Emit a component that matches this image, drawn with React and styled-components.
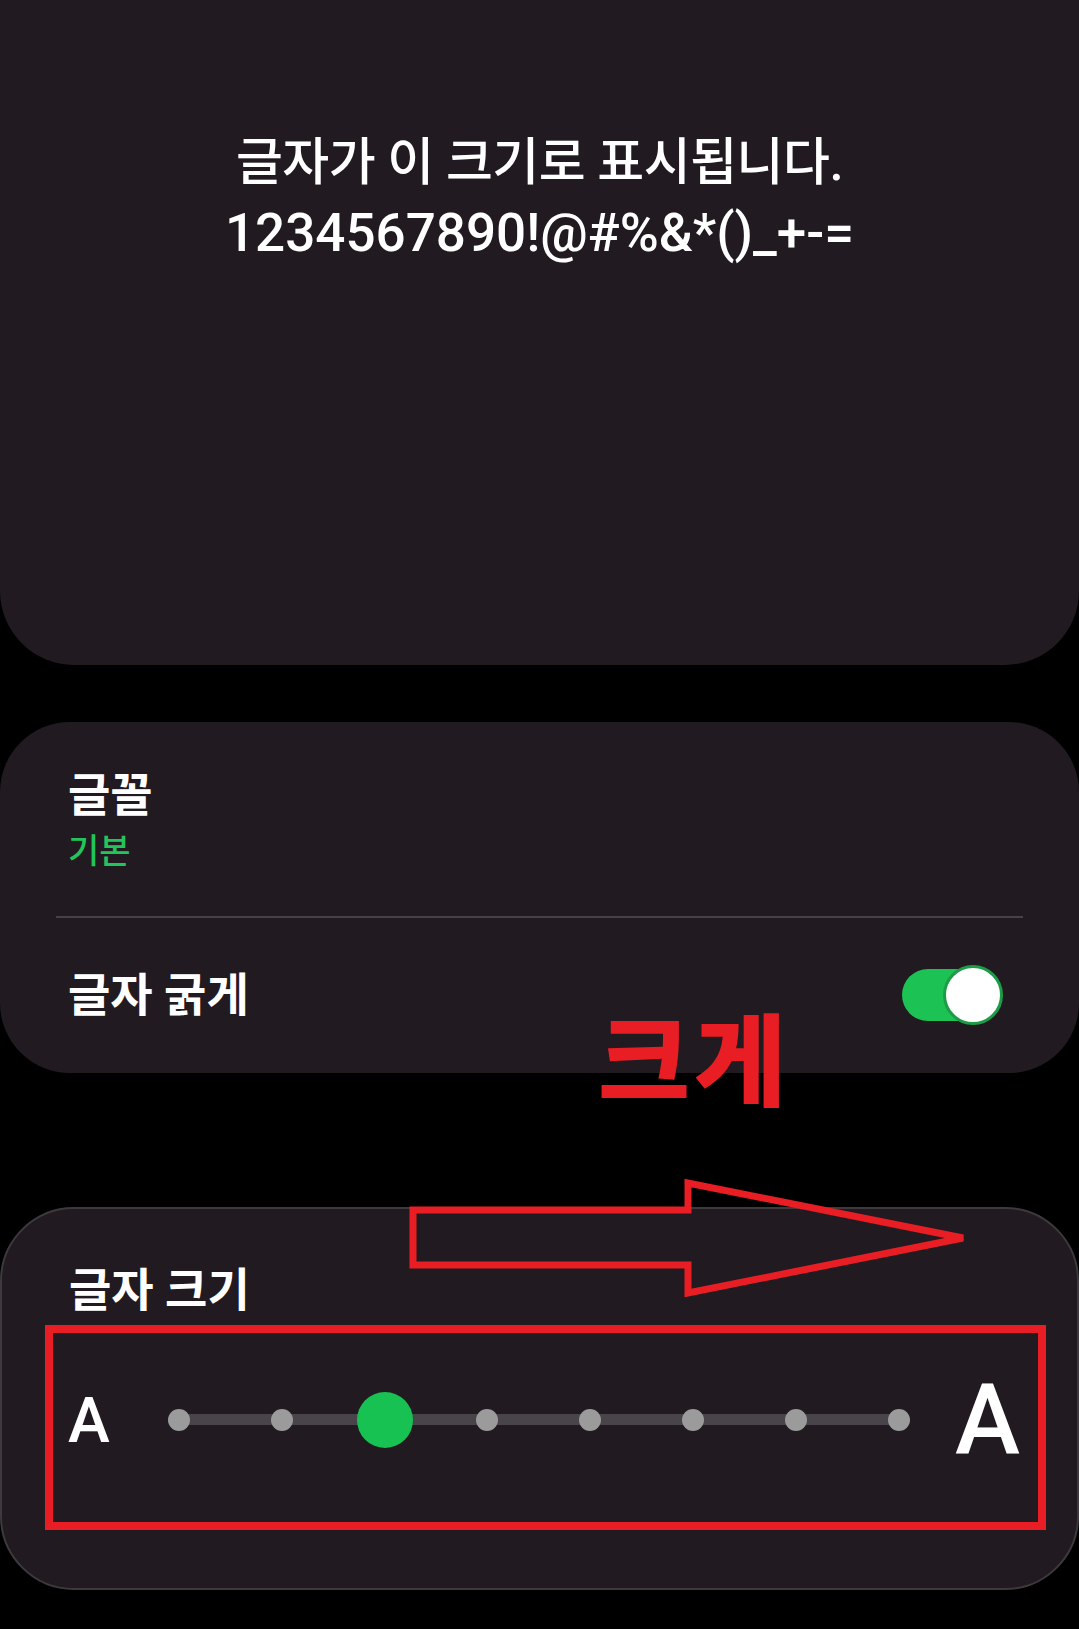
import React from 'react';
import styled, { createGlobalStyle } from 'styled-components';

const GlobalStyle = createGlobalStyle`
  html, body {
    margin: 0;
    padding: 0;
    background: #000;
  }
  body {
    font-family: Roboto, "Noto Sans CJK KR", sans-serif;
    color: #fff;
  }
`;

const Page = styled.div`
  position: relative;
  width: 1079px;
  height: 1629px;
  background: #000;
  overflow: hidden;
`;

const PreviewCard = styled.section`
  height: 665px;
  box-sizing: border-box;
  padding-top: 128px;
  background: #211a20;
  border-radius: 0 0 74px 74px;
  text-align: center;
`;

const PreviewText = styled.p`
  margin: 0;
  font-size: 51px;
  line-height: 70px;
  font-weight: 500;
  letter-spacing: -0.5px;
`;

const Digits = styled.span`
  display: block;
  font-size: 53px;
  letter-spacing: 0;
`;

const SettingsCard = styled.section`
  margin-top: 57px;
  height: 351px;
  box-sizing: border-box;
  padding: 0 56px;
  background: #211a20;
  border-radius: 70px;
`;

const FontItem = styled.div`
  padding: 44px 12px 44px;
`;

const Title = styled.div`
  font-size: 46px;
  line-height: 58px;
  font-weight: 700;
  color: #fff;
`;

const SubValue = styled.div`
  margin-top: 6px;
  font-size: 34px;
  line-height: 42px;
  font-weight: 500;
  color: #22c55a;
`;

const Divider = styled.hr`
  margin: 0;
  border: 0;
  height: 2px;
  background: #48414a;
`;

const ToggleRow = styled.div`
  height: 154px;
  display: flex;
  align-items: center;
  justify-content: space-between;
  padding: 0 20px 0 12px;
`;

const Switch = styled.div`
  position: relative;
  width: 101px;
  height: 62px;
`;

const SwitchTrack = styled.div`
  position: absolute;
  left: 0;
  top: 5px;
  width: 94px;
  height: 52px;
  border-radius: 26px;
  background: #1cc254;
`;

const SwitchThumb = styled.div`
  position: absolute;
  right: 0;
  top: 1px;
  width: 60px;
  height: 60px;
  box-sizing: border-box;
  border-radius: 50%;
  background: #fff;
  border: 3px solid #1d9c47;
`;

const SizeCard = styled.section`
  margin-top: 134px;
  height: 383px;
  box-sizing: border-box;
  padding: 52px 31px 0 43px;
  background: #211a20;
  border: 2px solid #3d393d;
  border-radius: 74px;
`;

const SizeTitle = styled(Title)`
  padding-left: 24px;
`;

const Highlight = styled.div`
  margin-top: 6px;
  height: 205px;
  box-sizing: border-box;
  border: 8px solid #e91e25;
  padding: 37px 18px 0 15px;
`;

const SliderRow = styled.div`
  display: flex;
  align-items: center;
  height: 100px;
`;

const Letter = styled.span`
  font-family: Roboto, sans-serif;
  font-weight: 500;
  font-size: ${(p) => (p.large ? '98px' : '63px')};
  line-height: 1;
  color: #fff;
`;

const Slider = styled.div`
  position: relative;
  flex: 1;
  margin: 0 28px 0 41px;
  height: 56px;
  display: flex;
  justify-content: space-between;
  align-items: center;

  &::before {
    content: '';
    position: absolute;
    left: 28px;
    right: 28px;
    top: 22px;
    height: 11px;
    background: #48444a;
  }
`;

const Stop = styled.div`
  position: relative;
  width: 56px;
  height: 56px;
  display: flex;
  align-items: center;
  justify-content: center;

  &::after {
    content: '';
    width: ${(p) => (p.active ? '56px' : '22px')};
    height: ${(p) => (p.active ? '56px' : '22px')};
    border-radius: 50%;
    background: ${(p) => (p.active ? '#17c252' : '#9b9b9b')};
  }
`;

const BigLabel = styled.div`
  position: absolute;
  left: 598px;
  top: 985px;
  font-family: "Noto Sans CJK KR", sans-serif;
  font-weight: 900;
  font-size: 100px;
  line-height: 140px;
  letter-spacing: 4px;
  color: #e91e25;
`;

const ArrowMark = styled.svg`
  position: absolute;
  left: 0;
  top: 0;
  width: 1079px;
  height: 1629px;
  pointer-events: none;
`;

const stops = [0, 1, 2, 3, 4, 5, 6, 7];

export default function App() {
  return (
    <>
      <GlobalStyle />
      <Page>
        <PreviewCard>
          <PreviewText>
            글자가 이 크기로 표시됩니다.
            <Digits>1234567890!@#%&amp;*()_+-=</Digits>
          </PreviewText>
        </PreviewCard>

        <SettingsCard>
          <FontItem>
            <Title>글꼴</Title>
            <SubValue>기본</SubValue>
          </FontItem>
          <Divider />
          <ToggleRow>
            <Title>글자 굵게</Title>
            <Switch>
              <SwitchTrack />
              <SwitchThumb />
            </Switch>
          </ToggleRow>
        </SettingsCard>

        <SizeCard>
          <SizeTitle>글자 크기</SizeTitle>
          <Highlight>
            <SliderRow>
              <Letter>A</Letter>
              <Slider>
                {stops.map((i) => (
                  <Stop key={i} active={i === 2} />
                ))}
              </Slider>
              <Letter large>A</Letter>
            </SliderRow>
          </Highlight>
        </SizeCard>

        <BigLabel>크게</BigLabel>
        <ArrowMark viewBox="0 0 1079 1629">
          <polygon
            points="413,1210 688,1210 688,1183 963,1238 688,1293 688,1265 413,1265"
            fill="none"
            stroke="#e91e25"
            strokeWidth="7"
            strokeLinejoin="miter"
          />
        </ArrowMark>
      </Page>
    </>
  );
}
